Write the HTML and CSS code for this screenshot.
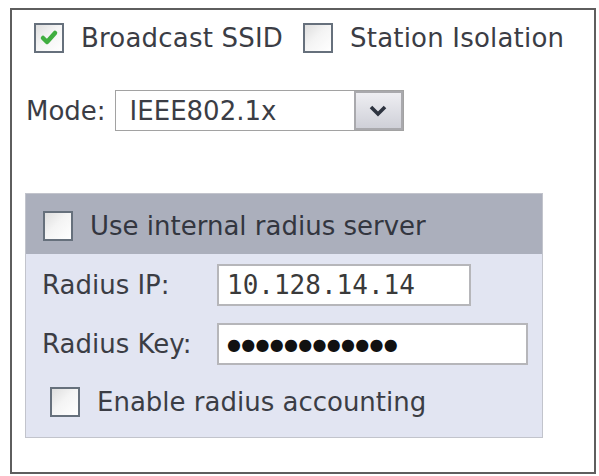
FILE: index.html
```html
<!DOCTYPE html>
<html lang="en">
<head>
  <meta charset="UTF-8">
  <title>Wireless Settings</title>
  <link rel="stylesheet" href="styles.css">
</head>
<body>

  <div class="wlan-box">
    <div class="top-row">
      <label class="check-item">
        <span class="box checked">
          <svg width="20" height="18" viewBox="0 0 20 18"><polyline points="4,9 8,13 16,4" fill="none" stroke="#3fae3f" stroke-width="4.5" stroke-linecap="round" stroke-linejoin="round"/></svg>
        </span>
        Broadcast SSID
      </label>
      <label class="check-item second">
        <span class="box"></span>
        Station Isolation
      </label>
    </div>

    <div class="mode-row">
      <span>Mode:</span>
      <div class="select">
        <span class="select-value">IEEE802.1x</span>
        <span class="select-btn">
          <svg width="18" height="12" viewBox="0 0 18 12"><polyline points="2,2 9,9 16,2" fill="none" stroke="#2e3440" stroke-width="3.6"/></svg>
        </span>
      </div>
    </div>

    <div class="radius-panel">
      <div class="radius-head">
        <label class="check-item">
          <span class="box"></span>
          Use internal radius server
        </label>
      </div>
      <div class="radius-body">
        <div class="field-row">
          <span class="field-label">Radius IP:</span>
          <div class="field ip">10.128.14.14</div>
        </div>
        <div class="field-row key-row">
          <span class="field-label">Radius Key:</span>
          <div class="field key">●●●●●●●●●●●●</div>
        </div>
        <label class="check-item accounting">
          <span class="box"></span>
          Enable radius accounting
        </label>
      </div>
    </div>
  </div>

</body>
</html>
```

FILE: styles.css
```css
body {
  margin: 0;
  padding: 0;
  background: #ffffff;
  font-family: 'DejaVu Sans', Verdana, sans-serif;
  font-size: 26px;
  color: #3b3d45;
}

.wlan-box {
  box-sizing: border-box;
  margin: 8px 3px 0 10px;
  height: 466px;
  border: 2px solid #5e5e5e;
  padding: 13px 0 0 13px;
}

.top-row {
  display: flex;
  align-items: center;
  height: 30px;
  padding-left: 9px;
  letter-spacing: 0.2px;
}

.check-item {
  display: flex;
  align-items: center;
  gap: 17px;
  white-space: nowrap;
}

.check-item.second {
  margin-left: 20px;
}

.box {
  box-sizing: border-box;
  width: 30px;
  height: 30px;
  border: 2px solid #66707c;
  background: linear-gradient(135deg, #dedede, #f4f4f4 45%, #ffffff);
  display: flex;
  align-items: center;
  justify-content: center;
  flex-shrink: 0;
}

.mode-row {
  display: flex;
  align-items: center;
  margin-top: 37px;
  padding-left: 1px;
}

.select {
  box-sizing: border-box;
  display: flex;
  margin-left: 9px;
  width: 289px;
  height: 41px;
  border: 1px solid #a2a2a2;
  background: #ffffff;
}

.select-value {
  flex: 1;
  display: flex;
  align-items: center;
  padding-left: 14px;
}

.select-btn {
  width: 45px;
  display: flex;
  align-items: center;
  justify-content: center;
  border: 2px solid #a9a9ad;
  background: linear-gradient(to bottom, #eeeef2, #cfd0d8);
}

.radius-panel {
  margin-top: 62px;
  width: 518px;
  box-sizing: border-box;
  border: 1px solid #c2c4cc;
  background: #e2e5f2;
}

.radius-head {
  height: 60px;
  display: flex;
  align-items: center;
  padding: 4px 0 0 17px;
  box-sizing: border-box;
  background: #abafbc;
  color: #33363f;
}

.radius-body {
  padding: 10px 0 20px 16px;
}

.field-row {
  display: flex;
  align-items: center;
}

.key-row {
  margin-top: 17px;
}

.field-label {
  width: 175px;
}

.field {
  box-sizing: border-box;
  height: 42px;
  border: 2px solid #b6b6ba;
  background: #ffffff;
  padding-left: 8px;
  display: flex;
  align-items: center;
  font-family: 'DejaVu Sans Mono', 'Liberation Mono', monospace;
  color: #3a3a3a;
}

.field.ip {
  width: 254px;
}

.field.key {
  width: 311px;
  font-family: 'DejaVu Sans', sans-serif;
  font-size: 16px;
  letter-spacing: 0.3px;
  color: #111111;
}

.accounting {
  margin-top: 22px;
  padding-left: 8px;
}
```
